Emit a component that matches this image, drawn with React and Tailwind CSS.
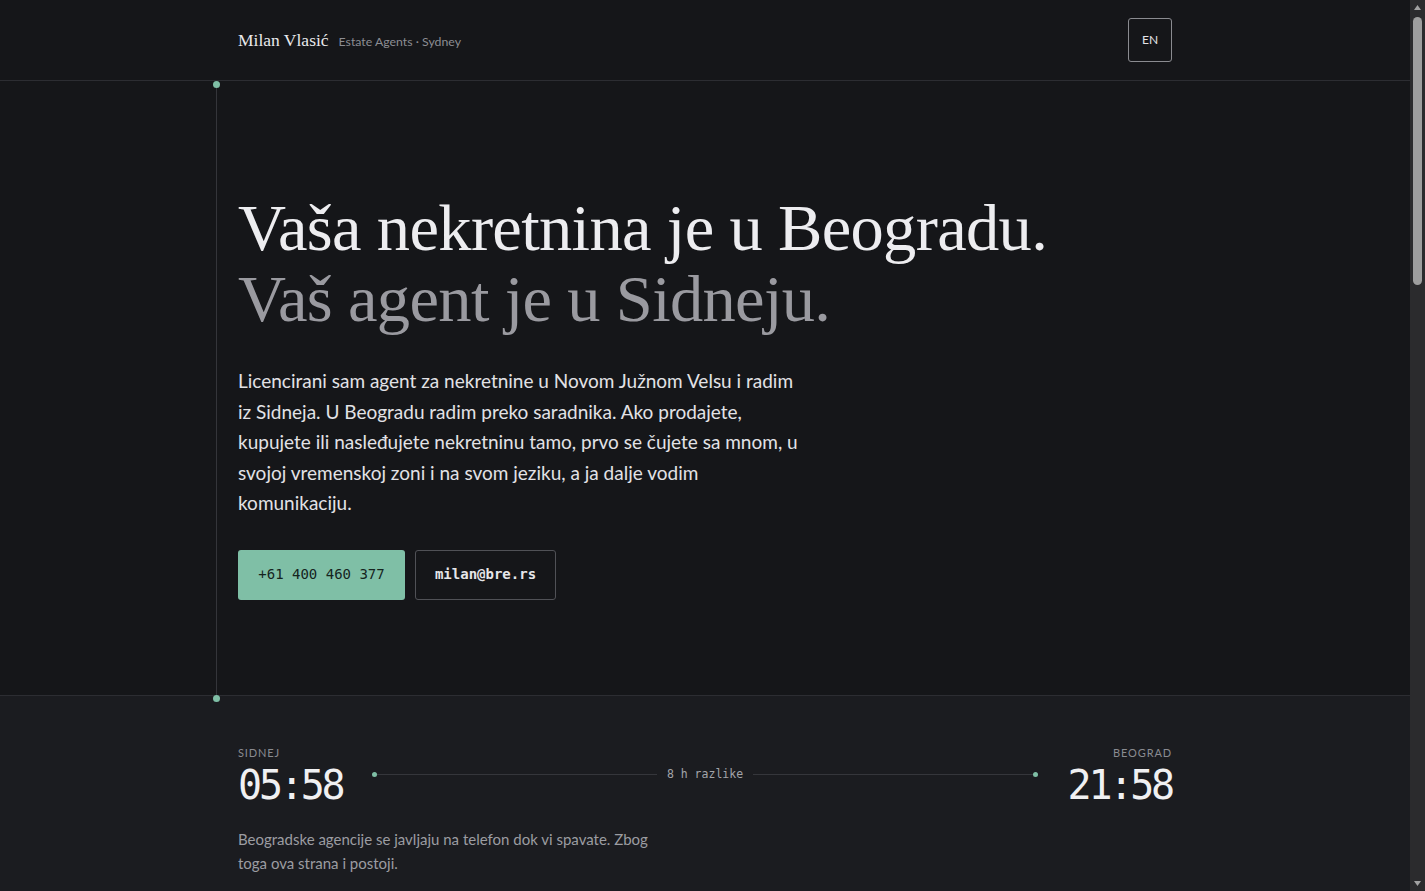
import React from 'react';

const Header = () => (
  <header className="border-b border-[#2c2d32]">
    <div className="mx-auto flex h-20 w-[934px] items-center justify-between">
      <div className="flex items-baseline gap-2.5">
        <span className="text-[17.5px] text-[#e9e9ec] font-['Liberation_Serif',serif]">Milan Vlasić</span>
        <span className="text-[12.3px] text-[#8c8d93] font-['Lato',sans-serif]">Estate Agents · Sydney</span>
      </div>
      <button className="flex h-11 w-11 items-center justify-center rounded-[3px] border border-[#8a8b90] text-[12px] text-[#e4e4e7] font-['Lato',sans-serif]">
        EN
      </button>
    </div>
  </header>
);

const Hero = () => (
  <section className="border-b border-[#2c2d32]">
    <div className="relative mx-auto w-[934px] pt-[111px] pb-[95px]">
      <div className="absolute -left-[22px] top-[3px] bottom-[-4px] w-px bg-[#34353a]" />
      <span className="absolute -left-[25px] top-0 h-[7px] w-[7px] rounded-full bg-[#7fbfa6]" />
      <span className="absolute -left-[25px] -bottom-[7px] h-[7px] w-[7px] rounded-full bg-[#7fbfa6]" />
      <h1 className="text-[66.5px] leading-[71px] font-['Liberation_Serif',serif] tracking-[-0.01em]">
        <span className="block text-[#ededf0]">Vaša nekretnina je u Beogradu.</span>
        <span className="block text-[#9a9aa0]">Vaš agent je u Sidneju.</span>
      </h1>
      <p className="mt-[32px] max-w-[566px] text-[19px] leading-[30.5px] text-[#e2e2e6] font-['Lato',sans-serif]">
        Licencirani sam agent za nekretnine u Novom Južnom Velsu i radim iz Sidneja. U Beogradu radim preko saradnika. Ako prodajete, kupujete ili nasleđujete nekretninu tamo, prvo se čujete sa mnom, u svojoj vremenskoj zoni i na svom jeziku, a ja dalje vodim komunikaciju.
      </p>
      <div className="mt-[31px] flex gap-[10px] font-['DejaVu_Sans_Mono',monospace] text-[14px]">
        <a className="flex h-[50px] w-[167px] items-center justify-center rounded-[3px] bg-[#7fbfa6] text-[#15241e]">
          +61 400 460 377
        </a>
        <a className="flex h-[50px] w-[141px] items-center justify-center rounded-[3px] border border-[#505156] font-bold text-[#e6e6e9]">
          milan@bre.rs
        </a>
      </div>
    </div>
  </section>
);

const Clock = ({ label, time, align }) => (
  <div className={align === 'right' ? 'text-right' : ''}>
    <div className="text-[11px] tracking-[0.08em] text-[#8a8b91] font-['Lato',sans-serif]">{label}</div>
    <div className="mt-[2px] text-[40px] leading-[44px] tracking-[-0.08em] text-[#f0f0f2] font-['DejaVu_Sans_Mono',monospace]">
      {time}
    </div>
  </div>
);

const TimeSection = () => (
  <section className="bg-[#1b1c20]">
    <div className="mx-auto w-[934px] pt-[49px] pb-[120px]">
      <div className="flex items-start gap-[30px]">
        <Clock label="SIDNEJ" time="05:58" />
        <div className="mt-[21px] flex flex-1 items-center">
          <span className="h-[5px] w-[5px] rounded-full bg-[#7fbfa6]" />
          <span className="h-px flex-1 bg-[#35363b]" />
          <span className="px-[10px] text-[11.5px] text-[#a3a4a9] font-['DejaVu_Sans_Mono',monospace]">8 h razlike</span>
          <span className="h-px flex-1 bg-[#35363b]" />
          <span className="h-[5px] w-[5px] rounded-full bg-[#7fbfa6]" />
        </div>
        <Clock label="BEOGRAD" time="21:58" align="right" />
      </div>
      <p className="mt-[20px] max-w-[420px] text-[15px] leading-[24px] text-[#9c9da2] font-['Lato',sans-serif]">
        Beogradske agencije se javljaju na telefon dok vi spavate. Zbog toga ova strana i postoji.
      </p>
    </div>
  </section>
);

const Services = () => (
  <section className="border-t border-[#2c2d32]">
    <div className="mx-auto w-[934px] py-24">
      <h2 className="text-[40px] text-[#ededf0] font-['Liberation_Serif',serif]">Šta radim</h2>
      <div className="mt-10 grid grid-cols-3 gap-8 font-['Lato',sans-serif]">
        {['Prodaja', 'Kupovina', 'Nasleđe'].map((t) => (
          <div key={t} className="border-t border-[#34353a] pt-6">
            <h3 className="text-[18px] text-[#e2e2e6]">{t}</h3>
            <p className="mt-3 text-[15px] leading-[24px] text-[#9c9da2]">
              Vodim ceo proces sa saradnicima u Beogradu, a vi dobijate jasne informacije na vreme.
            </p>
          </div>
        ))}
      </div>
    </div>
  </section>
);

const Footer = () => (
  <footer className="border-t border-[#2c2d32]">
    <div className="mx-auto h-[900px] w-[934px] pt-16 text-[13px] text-[#7c7d83] font-['Lato',sans-serif]">
      Milan Vlasić · Estate Agents · Sydney
    </div>
  </footer>
);

// page scrollbar as drawn by the browser in the reference
const Scrollbar = () => (
  <div className="flex h-screen w-[15px] shrink-0 flex-col items-center bg-[#2b2b2d]">
    <svg width="9" height="14" viewBox="0 0 9 14" className="shrink-0">
      <path d="M1 10 L4.5 5 L8 10 Z" fill="#a3a3a3" />
    </svg>
    <div className="mt-[3px] h-[268px] w-[9px] rounded-full bg-[#9e9e9e]" />
    <div className="flex-1" />
    <svg width="9" height="14" viewBox="0 0 9 14" className="shrink-0">
      <path d="M1 4 L8 4 L4.5 9 Z" fill="#a3a3a3" />
    </svg>
  </div>
);

export default function App() {
  return (
    <div className="flex h-screen overflow-hidden bg-[#151619]">
      <main className="h-screen flex-1 overflow-y-auto [scrollbar-width:none]">
        <Header />
        <Hero />
        <TimeSection />
        <Services />
        <Footer />
      </main>
      <Scrollbar />
    </div>
  );
}
